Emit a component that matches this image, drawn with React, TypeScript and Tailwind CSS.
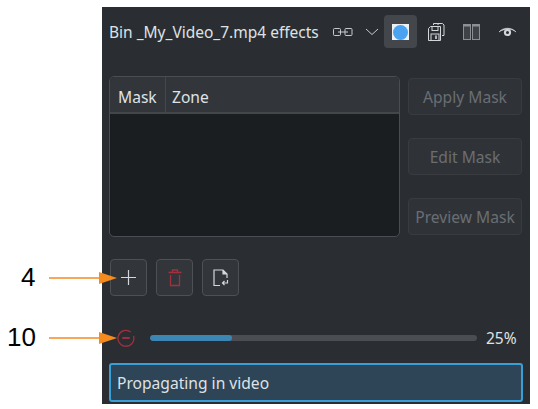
import React from "react";

function Arrow({ top, width = 70 }: { top: number; width?: number }) {
  return (
    <svg className="absolute left-[48px]" style={{ top }} width={width} height="16" viewBox="0 0 70 16">
      <path d="M1 8H54" stroke="#f58a1f" strokeWidth="1.7" fill="none" />
      <path d="M51 2L69 8L51 14Z" fill="#f58a1f" />
    </svg>
  );
}

function SideButton({ label }: { label: string }) {
  return (
    <div className="flex h-[37px] w-[114px] items-center justify-center rounded-[4px] border border-[#383c41] bg-[#2f3338] pt-[2px] text-[15.6px] text-[#6a6e72]">
      {label}
    </div>
  );
}

function ToolButton({ children }: { children: React.ReactNode }) {
  return (
    <div className="flex h-[37px] w-[37px] items-center justify-center rounded-[4px] border border-[#4d5156] bg-[#32363b]">
      {children}
    </div>
  );
}

export default function App() {
  return (
    <div className="relative h-[409px] w-[538px] overflow-hidden bg-white pl-[102px] pt-[7px] font-['Noto_Sans',sans-serif]">
      <div className="flex h-[397px] w-[428px] flex-col bg-[#2a2e32] pl-[7px] pr-[7px] text-[#e0e3e6]">
        <div className="flex h-[40px] items-center pt-[10px]">
          <span className="w-[224px] whitespace-nowrap pt-[1px] text-[15.5px] leading-none text-[#dfe2e5]">Bin _My_Video_7.mp4 effects</span>
          <svg width="20" height="10" viewBox="0 0 20 10" fill="none" stroke="#c8cbce" strokeWidth="1">
            <rect x="0.5" y="1.5" width="7" height="7" rx="1" />
            <rect x="12" y="1.5" width="7" height="7" rx="1" />
            <path d="M5 5h10" />
          </svg>
          <svg className="ml-[12px]" width="14" height="8" viewBox="0 0 14 8" fill="none" stroke="#c8cbce" strokeWidth="1">
            <path d="M1 1L7 6.5L13 1" />
          </svg>
          <div className="mb-[2px] ml-[5px] flex h-[33px] w-[33px] items-center justify-center rounded-[4px] bg-[#43474c]">
            <div className="mt-[2px] flex h-[16px] w-[17px] items-center justify-center overflow-hidden bg-[#eef0f2]">
              <div className="h-[15px] w-[15px] shrink-0 rounded-full bg-[#4aa3f0]" />
            </div>
          </div>
          <svg className="ml-[10px]" width="18" height="20" viewBox="0 0 18 20" fill="none" stroke="#d4d7da" strokeWidth="1">
            <path d="M6.5 3V1.5H11V3M11 1.5H15.5L17 3V13.5H15" />
            <path d="M1.5 6.5L3.5 4.5H13.5V18.5H1.5Z" />
            <rect x="5" y="4.5" width="6" height="4" />
            <rect x="4" y="12" width="8" height="6.5" />
            <path d="M9 13.5V17" strokeWidth="1.6" />
          </svg>
          <svg className="ml-[18px]" width="17" height="16" viewBox="0 0 17 16">
            <rect x="0.5" y="0.5" width="7" height="15" fill="#3f4348" stroke="#8d9093" />
            <rect x="9.5" y="0.5" width="7" height="15" fill="#3f4348" stroke="#8d9093" />
            <rect x="0.5" y="0.5" width="7" height="2" fill="#8d9093" />
            <rect x="9.5" y="0.5" width="7" height="2" fill="#8d9093" />
          </svg>
          <svg className="ml-[18px]" width="19" height="12" viewBox="0 0 19 12">
            <path d="M1 6C5 1 14 1 18 6C15 3.8 13.5 3.5 12.5 3.5L9.5 3.2C7 3.3 4 4 1 6Z" fill="#d4d7da" stroke="#d4d7da" strokeWidth="0.6" />
            <circle cx="9.5" cy="6.5" r="3.6" fill="#d4d7da" />
            <circle cx="9.5" cy="6.5" r="1.5" fill="#2a2e32" />
          </svg>
        </div>

        <div className="mt-[29px] flex gap-[8px]">
          <div className="flex h-[161px] w-[291px] flex-col overflow-hidden rounded-[5px] border border-[#4a4e53] bg-[#1b1e20]">
            <div className="flex h-[37px] border-b-[2px] border-[#43474c] bg-[#32363b] text-[15.6px] text-[#dfe2e5]">
              <div className="flex w-[56px] items-center border-r border-[#43474c] pl-[8px] pt-[6px]">Mask</div>
              <div className="flex items-center pl-[6px] pt-[6px]">Zone</div>
            </div>
          </div>
          <div className="mt-[2px] flex flex-col gap-[23px]">
            <SideButton label="Apply Mask" />
            <SideButton label="Edit Mask" />
            <SideButton label="Preview Mask" />
          </div>
        </div>

        <div className="ml-[1px] mt-[22px] flex gap-[9px]">
          <ToolButton>
            <svg width="17" height="17" viewBox="0 0 17 17" stroke="#d4d7da" strokeWidth="1.2">
              <path d="M8.5 1V16M1 8.5H16" />
            </svg>
          </ToolButton>
          <ToolButton>
            <svg width="14" height="18" viewBox="0 0 14 18" fill="none" stroke="#a3303f" strokeWidth="1.3">
              <path d="M0.5 3.5H13.5M4.5 3.5V1H9.5V3.5" />
              <path d="M2.5 6V16.5H11.5V6" />
            </svg>
          </ToolButton>
          <ToolButton>
            <svg width="16" height="18" viewBox="0 0 16 18" fill="none" stroke="#d4d7da" strokeWidth="1.2">
              <path d="M7 16.5H1V1H10L14 5V9" />
              <path d="M10 1V5H14" fill="#d4d7da" />
              <path d="M14.5 11V14H9.5M11.5 12L9.5 14L11.5 16" />
            </svg>
          </ToolButton>
        </div>

        <div className="mt-[32px] flex h-[20px] items-center">
          <svg className="ml-[8px]" width="18" height="18" viewBox="0 0 17 17" fill="none" stroke="#a3303f">
            <path d="M13 2.8A7.5 7.5 0 1 0 15.6 6.5" strokeWidth="1.2" />
            <path d="M5 8.5H12" strokeWidth="1.8" />
          </svg>
          <div className="ml-[15px] h-[6px] w-[327px] overflow-hidden rounded-full bg-[#4a4e52]">
            <div className="h-full w-[25%] rounded-full bg-[#3c86b4]" />
          </div>
          <span className="ml-[9px] pt-[2px] text-[15.5px] leading-none text-[#dfe2e5]">25%</span>
        </div>

        <div className="mt-[15px] flex h-[39px] w-[414px] items-center rounded-[3px] border-[2px] border-[#3a9fd8] bg-[#2d4557] pl-[6px] pt-[2px] text-[15.6px] text-[#dfe2e5]">
          Propagating in video
        </div>
      </div>

      <span className="absolute left-[21px] top-[262px] font-['Liberation_Sans',sans-serif] text-[26px] leading-[30px] text-black">4</span>
      <span className="absolute left-[7px] top-[322px] font-['Liberation_Sans',sans-serif] text-[26px] leading-[30px] text-black">10</span>
      <Arrow top={270} />
      <Arrow top={330} />
    </div>
  );
}
